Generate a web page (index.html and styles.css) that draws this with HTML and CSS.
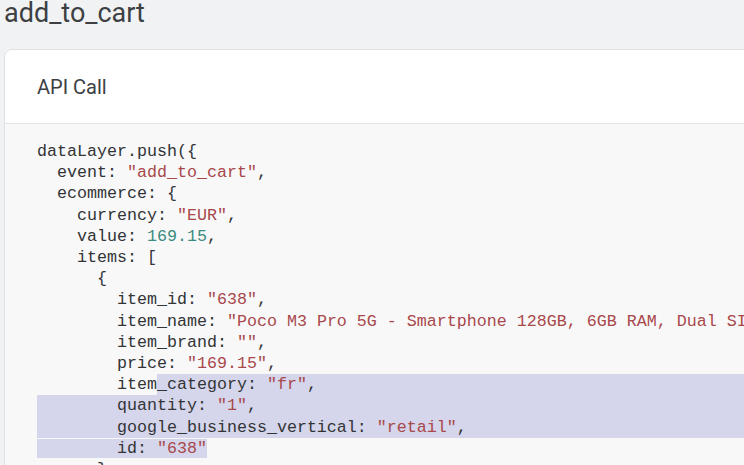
FILE: index.html
```html
<!DOCTYPE html>
<html>
<head>
<meta charset="utf-8">
<link rel="stylesheet" href="styles.css">
</head>
<body>
<h1 class="title">add_to_cart</h1>
<section class="card">
  <header class="card-head">API Call</header>
  <div class="code">
    <div class="ln">dataLayer.push({</div>
    <div class="ln">  event: <span class="s">"add_to_cart"</span>,</div>
    <div class="ln">  ecommerce: {</div>
    <div class="ln">    currency: <span class="s">"EUR"</span>,</div>
    <div class="ln">    value: <span class="n">169.15</span>,</div>
    <div class="ln">    items: [</div>
    <div class="ln">      {</div>
    <div class="ln">        item_id: <span class="s">"638"</span>,</div>
    <div class="ln">        item_name: <span class="s">"Poco M3 Pro 5G - Smartphone 128GB, 6GB RAM, Dual SIM, Negro"</span>,</div>
    <div class="ln">        item_brand: <span class="s">""</span>,</div>
    <div class="ln">        price: <span class="s">"169.15"</span>,</div>
    <div class="ln split"><span>        item</span><span class="sel-rest">_category: <span class="s">"fr"</span>,</span></div>
    <div class="ln sel">        quantity: <span class="s">"1"</span>,</div>
    <div class="ln sel">        google_business_vertical: <span class="s">"retail"</span>,</div>
    <div class="ln"><span class="sel-in">        id: <span class="s">"638"</span></span></div>
    <div class="ln">      }</div>
  </div>
</section>
</body>
</html>
```
FILE: styles.css
```css
html, body {
  margin: 0;
  padding: 0;
  background: #f1f2f4;
  overflow: hidden;
  height: 465px;
}

.title {
  margin: 0;
  padding-left: 4px;
  font-family: Roboto, "Liberation Sans", sans-serif;
  font-weight: 400;
  font-size: 27px;
  line-height: 27px;
  color: #3c4043;
}

.card {
  margin: 22px -20px 0 4px;
  background: #f8f8f9;
  border: 1px solid #dfe0e3;
  border-radius: 8px 8px 0 0;
  overflow: hidden;
  height: 600px;
}

.card-head {
  height: 73px;
  display: flex;
  align-items: center;
  padding-left: 32px;
  background: #ffffff;
  border-bottom: 1px solid #e2e3e6;
  font-family: Roboto, "Liberation Sans", sans-serif;
  font-size: 20px;
  color: #3c4043;
}

.code {
  padding: 17px 0 0 32px;
  font-family: "Courier New", "Liberation Mono", monospace;
  font-size: 16.67px;
  line-height: 21.2px;
  color: #333436;
}

.ln {
  white-space: pre;
}

.s {
  color: #a8484b;
}

.n {
  color: #3b8b7f;
}

.split {
  display: flex;
}

.sel-rest {
  flex: 1;
  background: #d5d6eb;
}

.sel {
  background: #d5d6eb;
}

.sel-in {
  background: #d5d6eb;
}
```
